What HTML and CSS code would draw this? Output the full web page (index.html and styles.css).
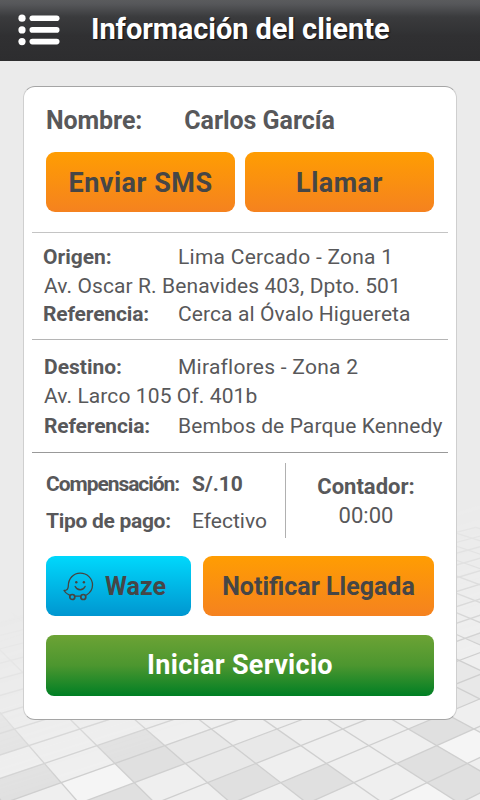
FILE: index.html
```html
<!DOCTYPE html>
<html lang="es">
<head>
  <meta charset="utf-8">
  <meta name="viewport" content="width=device-width, initial-scale=1.0">
  <title>Información del cliente</title>
  <link rel="stylesheet" href="styles.css">
</head>
<body>

  <!-- Tiled floor, filled in by floor.js -->
  <svg class="floor" id="floor" viewBox="0 0 1440 2400" aria-hidden="true"></svg>

  <header class="topbar">
    <svg class="menu-icon" width="42" height="32" viewBox="0 0 42 32" fill="#fff" role="img" aria-label="Menú">
      <circle cx="4" cy="4.2" r="3.6"/><rect x="11.5" y="1.4" width="30" height="5.6" rx="2.8"/>
      <circle cx="4" cy="15.9" r="3.6"/><rect x="11.5" y="13.1" width="30" height="5.6" rx="2.8"/>
      <circle cx="4" cy="27.6" r="3.6"/><rect x="11.5" y="24.8" width="30" height="5.6" rx="2.8"/>
    </svg>
    <h1>Información del cliente</h1>
  </header>

  <main class="card">
    <section class="client">
      <div class="name"><b>Nombre:</b><b class="person">Carlos García</b></div>
      <div class="buttons">
        <button class="btn orange sms">Enviar SMS</button>
        <button class="btn orange call">Llamar</button>
      </div>
    </section>

    <section class="place origin">
      <div class="row"><b>Origen:</b><span class="wide">Lima Cercado - Zona 1</span></div>
      <div class="row address"><span>Av. Oscar R. Benavides 403, Dpto. 501</span></div>
      <div class="row"><b class="ref">Referencia:</b><span>Cerca al Óvalo Higuereta</span></div>
    </section>

    <section class="place destination">
      <div class="row"><b>Destino:</b><span class="wide">Miraflores - Zona 2</span></div>
      <div class="row address"><span>Av. Larco 105 Of. 401b</span></div>
      <div class="row last"><b class="ref">Referencia:</b><span>Bembos de Parque Kennedy</span></div>
    </section>

    <section class="payment">
      <div class="amounts">
        <div class="pay"><b class="label tight">Compensación:</b><b>S/.10</b></div>
        <div class="pay"><b class="label">Tipo de pago:</b><span>Efectivo</span></div>
      </div>
      <div class="counter">
        <b>Contador:</b>
        <span>00:00</span>
      </div>
    </section>

    <section class="actions">
      <div class="buttons">
        <button class="btn blue">
          <svg width="31" height="29" viewBox="0 0 31 29" fill="none" stroke="#47443f" stroke-width="1.3" stroke-linecap="round" stroke-linejoin="round">
            <path d="M6.500 23.200C4 22 2 20.300 1 18.500c3.200 0 4.200-1.200 4.300-4.300C5.300 6.500 10.500 1.200 17.200 1.200c7 0 12.300 5.200 12.300 11.800 0 4.300-2.300 7.800-6 10"/>
            <path d="M12.500 24.200h4.700"/>
            <circle cx="9.300" cy="25" r="2.500" stroke-width="1.700"/>
            <circle cx="20.300" cy="25" r="2.500" stroke-width="1.700"/>
            <path d="M12.200 14.500c1 2.200 2.900 3.200 5 3.200s3.900-1 4.900-3.200" stroke-width="1.400"/>
            <circle cx="13.300" cy="10.200" r="1.200" fill="#47443f" stroke="none"/>
            <circle cx="20.900" cy="10.200" r="1.200" fill="#47443f" stroke="none"/>
          </svg>
          <span>Waze</span>
        </button>
        <button class="btn orange notify">Notificar Llegada</button>
      </div>
      <button class="btn green">Iniciar Servicio</button>
    </section>
  </main>

  <script src="floor.js"></script>
</body>
</html>
```
FILE: styles.css
```css
* { box-sizing: border-box; }
body { margin: 0; width: 480px; height: 800px; overflow: hidden; background: #ebebeb; font-family: Roboto, "Liberation Sans", sans-serif; color: #58585a; }
b { font-weight: 700; }
h1 { margin: 0; }

.floor { position: absolute; left: 0; top: 0; width: 480px; height: 800px; z-index: -1; }

.topbar { display: flex; align-items: center; height: 61px; padding: 0 0 2px 18px; background: linear-gradient(#5a5b5d 0, #56575a 4px, #3a3b3d 17px, #303032 36px, #2d2d2f 100%); color: #fff; }
.menu-icon { margin-right: 31px; }
.topbar h1 { padding-bottom: 2px; font-size: 29px; font-weight: 700; line-height: 40px; letter-spacing: -0.07px; white-space: nowrap; text-shadow: 1px 1px 1px #111; }

.card { width: 434px; height: 634px; margin: 25px 0 0 23px; padding: 0 8px; background: #fff; border: 1px solid #a5a5a5; border-left-color: #cfcfcf; border-right-color: #cfcfcf; border-radius: 12px; }

.name { display: flex; padding: 19px 0 0 14px; font-size: 25px; line-height: 30px; letter-spacing: -0.1px; white-space: nowrap; }
.person { margin-left: 42px; letter-spacing: -0.05px; }
.buttons { display: flex; gap: 10px; padding: 0 14px; }
.client { height: 146px; border-bottom: 1px solid #c4c4c4; }
.client .buttons { margin-top: 16px; }

.btn { display: flex; align-items: center; justify-content: center; height: 60px; padding: 0; border: 0; border-radius: 9px; font-family: inherit; font-weight: 700; color: #464646; white-space: nowrap; }
.orange { background: linear-gradient(#ff9d02, #f5821f); }
.blue { background: linear-gradient(#00d8fc, #0096d0); }
.green { width: 388px; height: 61px; margin: 19px 0 0 14px; padding-bottom: 2px; background: linear-gradient(#6ca335, #4c962f 50%, #007f24); border-radius: 8px; color: #fff; font-size: 27px; letter-spacing: 0.3px; }
.sms, .call { flex: 1; padding-top: 2px; font-size: 27px; letter-spacing: 0.5px; }

.place { padding-left: 11px; font-size: 21px; line-height: 28.5px; white-space: nowrap; letter-spacing: 0.1px; }
.row { display: flex; }
.row b { width: 135px; letter-spacing: 0; }
.row .ref { letter-spacing: -0.15px; }
.row .wide { letter-spacing: 0.25px; }
.address { padding-left: 1px; }
.origin { height: 107px; padding-top: 10px; border-bottom: 1px solid #b5b5b5; }
.destination { height: 113px; padding-top: 13px; border-bottom: 1px solid #999; }
.destination b { padding-left: 1px; }
.last { margin-top: 2px; }

.payment { display: flex; padding-top: 10px; height: 103px; }
.amounts { width: 254px; height: 75px; padding-left: 14px; border-right: 1px solid #b0b0b0; }
.pay { display: flex; height: 37px; font-size: 21px; line-height: 43px; white-space: nowrap; }
.label { width: 146px; letter-spacing: -0.3px; }
.tight { letter-spacing: -1.05px; }
.counter { flex: 1; display: flex; flex-direction: column; align-items: center; padding: 10px 2px 0 0; font-size: 22px; line-height: 28.5px; }

.actions .buttons { gap: 12px; }
.blue { width: 145px; padding: 1px 8px 0 0; gap: 11px; font-size: 25px; }
.notify { flex: 1; padding-top: 1px; font-size: 25px; }
```
FILE: floor.js
```js
const floor = document.getElementById('floor');

// Corner of the tile grid: n picks the falling line, r the row
function corner(n, r) {
  const t = 197 * r / (658.5 - 22.5 * r);
  const x = 240 + 197 * n + (163 + 22.5 * n) * t;
  return x.toFixed(1) + ',' + (2187 + 161 * t).toFixed(1);
}

// Tile by its top corner
function tile(n, r, color) {
  const pts = [corner(n, r), corner(n, r + 1), corner(n - 1, r + 2), corner(n - 1, r + 1)];
  return `<polygon points="${pts.join(' ')}" fill="${color}"/>`;
}

const dark = [[1, 0], [1, 1], [-1, 2], [0, 3], [2, 2], [3, 2], [5, 1], [5, 2], [6, -1], [-1, 0], [-1, -1]];
const mid = [[3, 0], [2, 1], [2, 0], [7, -3], [8, -4], [8, -5], [10, -8]];
const light = [[0, 2], [6, 0], [4, 3]];

let tiles = '<rect y="1500" width="1440" height="900" fill="#efefef"/>';
dark.forEach(([n, r]) => tiles += tile(n, r, '#e0e0e0'));
mid.forEach(([n, r]) => tiles += tile(n, r, '#e8e8e8'));
light.forEach(([n, r]) => tiles += tile(n, r, '#f5f5f5'));

let lines = '';
for (let n = -8; n < 18; n++) {
  lines += `<polyline points="${corner(n, -22)} ${corner(n, 6)}"/>`;
}
for (let m = -16; m < 20; m++) {
  lines += `<polyline points="${corner(m + 22, -22)} ${corner(m - 6, 6)}"/>`;
}

floor.innerHTML = `
  <linearGradient id="fade" gradientUnits="userSpaceOnUse" x1="700" y1="1620" x2="860" y2="2130">
    <stop offset="0" stop-color="#000"/><stop offset="0.5" stop-color="#505050"/><stop offset="1" stop-color="#fff"/>
  </linearGradient>
  <mask id="m" maskUnits="userSpaceOnUse" x="0" y="1500" width="1440" height="900"><rect y="1500" width="1440" height="900" fill="url(#fade)"/></mask>
  <g mask="url(#m)">${tiles}<g stroke="#cfcfcf" stroke-width="4" fill="none">${lines}</g></g>`;
```
